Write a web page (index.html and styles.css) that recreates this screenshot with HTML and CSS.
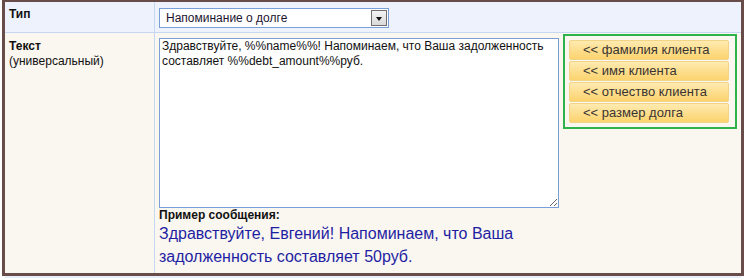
FILE: index.html
```html
<!DOCTYPE html>
<html lang="ru">

<head>
  <meta charset="UTF-8">
  <title>Шаблон сообщения</title>
  <link rel="stylesheet" href="styles.css">
</head>

<body>
  <div class="frame">
    <table class="form-table">
      <!-- Тип сообщения -->
      <tr class="row-type">
        <td class="label-cell"><b>Тип</b></td>
        <td class="field-cell">
          <div class="select-box">
            <span class="select-value">Напоминание о долге</span>
            <span class="select-arrow"></span>
          </div>
        </td>
      </tr>
      <!-- Текст сообщения -->
      <tr class="row-text">
        <td class="label-cell">
          <b>Текст</b><br>
          (универсальный)
        </td>
        <td class="field-cell">
          <div class="text-layout">
            <div class="text-main">
              <textarea class="msg-text">Здравствуйте, %%name%%! Напоминаем, что Ваша задолженность составляет %%debt_amount%%руб.</textarea>
              <div class="example-title">Пример сообщения:</div>
              <div class="example-text">Здравствуйте, Евгений! Напоминаем, что Ваша задолженность составляет 50руб.</div>
            </div>
            <div class="vars-box">
              <button class="var-btn">&lt;&lt; фамилия клиента</button>
              <button class="var-btn">&lt;&lt; имя клиента</button>
              <button class="var-btn">&lt;&lt; отчество клиента</button>
              <button class="var-btn">&lt;&lt; размер долга</button>
            </div>
          </div>
        </td>
      </tr>
    </table>
  </div>
  <div class="next-row"></div>
</body>

</html>
```

FILE: styles.css
```css
* {
  margin: 0;
  padding: 0;
  box-sizing: border-box;
}

body {
  font-family: Arial, 'Liberation Sans', sans-serif;
  font-size: 12px;
  color: #111;
  background-color: #fff;
}

/* внешняя рамка */
.frame {
  margin-left: 2px;
  width: 742px;
  border: 3px solid #684c49;
  border-top-width: 2px;
}

.next-row {
  margin-left: 5px;
  width: 736px;
  height: 2px;
  background-color: #e8eef9;
}

.form-table {
  width: 100%;
  border-collapse: collapse;
}

.form-table td {
  vertical-align: top;
}

.label-cell {
  width: 150px;
  padding: 5px 4px;
  border-right: 1px solid #c6d8f1;
  font-size: 12px;
  line-height: 15px;
}

.row-type td {
  background-color: #edf2fd;
  border-bottom: 1px solid #c6d8f1;
  height: 30px;
}

.row-text td {
  background-color: #faf6f0;
  height: 241px;
}

.row-type .field-cell {
  padding: 6px 4px 2px;
}

.row-text .field-cell {
  padding: 0 4px;
}

.row-text .label-cell {
  padding-top: 6px;
}

/* выпадающий список */
.select-box {
  display: flex;
  align-items: center;
  width: 230px;
  height: 20px;
  border: 1px solid #7a9fd6;
  background-color: #fff;
  padding: 1px 1px 1px 6px;
}

.select-value {
  flex: 1;
  font-size: 12px;
  color: #1c1530;
}

.select-arrow {
  position: relative;
  width: 16px;
  height: 16px;
  border: 1px solid #6f6f6f;
  background: linear-gradient(#f4f4f4, #d9d9d9);
}

.select-arrow::after {
  content: '';
  position: absolute;
  left: 4px;
  top: 6px;
  border-left: 3px solid transparent;
  border-right: 3px solid transparent;
  border-top: 4px solid #111;
}

/* текст сообщения */
.text-layout {
  display: flex;
  align-items: flex-start;
  gap: 4px;
}

.text-main {
  width: 400px;
  padding-top: 5px;
}

.vars-box {
  margin-top: 1px;
}

.msg-text {
  display: block;
  width: 400px;
  height: 170px;
  border: 1px solid #7a9fd6;
  padding: 0 2px;
  font-family: Arial, 'Liberation Sans', sans-serif;
  font-size: 12px;
  line-height: 15px;
  color: #111;
  resize: vertical;
  outline: none;
}

.example-title {
  margin-top: 1px;
  font-weight: bold;
  font-size: 12px;
  line-height: 13px;
}

.example-text {
  font-size: 16px;
  line-height: 23px;
  color: #1f1fa3;
}

/* кнопки переменных */
.vars-box {
  width: 174px;
  border: 2px solid #2eb24c;
  padding: 4px 5px 4px 4px;
  display: flex;
  flex-direction: column;
  gap: 1px;
}

.var-btn {
  height: 20px;
  width: 160px;
  text-align: left;
  padding-left: 13px;
  border: 1px solid #f1d486;
  border-radius: 2px;
  background: linear-gradient(#feeab0, #fcd36e);
  font-family: Arial, 'Liberation Sans', sans-serif;
  font-size: 13px;
  color: #3a3430;
  cursor: pointer;
}
```
